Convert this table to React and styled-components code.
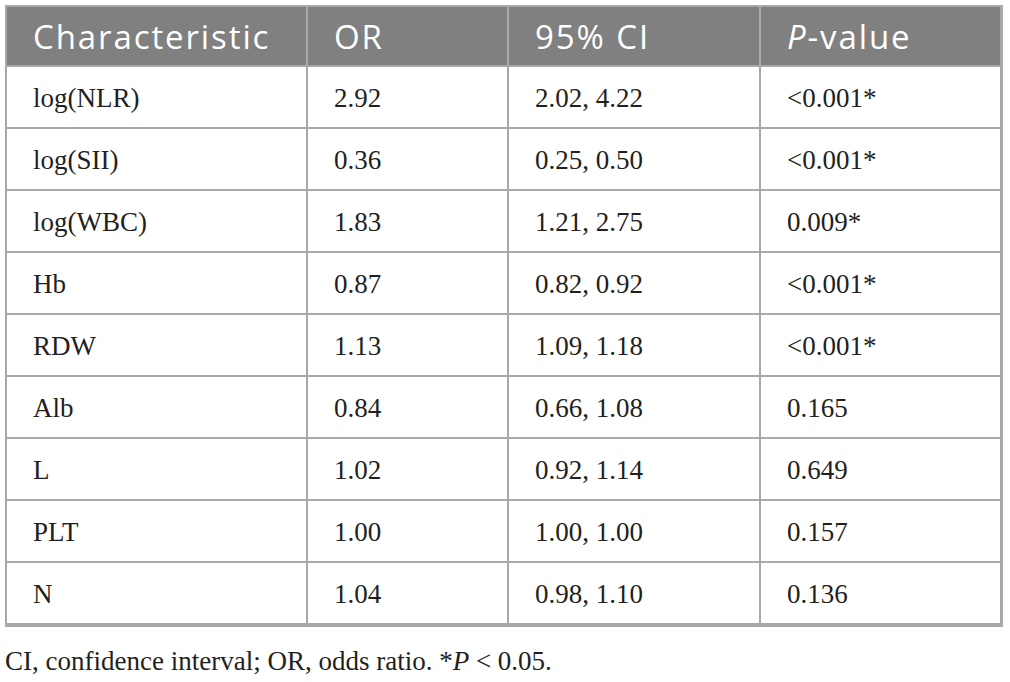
import React from 'react';
import styled, { createGlobalStyle } from 'styled-components';

const GlobalStyle = createGlobalStyle`
  html, body {
    margin: 0;
    padding: 0;
    background: #ffffff;
  }
`;

const rows = [
  ['log(NLR)', '2.92', '2.02, 4.22', '<0.001*'],
  ['log(SII)', '0.36', '0.25, 0.50', '<0.001*'],
  ['log(WBC)', '1.83', '1.21, 2.75', '0.009*'],
  ['Hb', '0.87', '0.82, 0.92', '<0.001*'],
  ['RDW', '1.13', '1.09, 1.18', '<0.001*'],
  ['Alb', '0.84', '0.66, 1.08', '0.165'],
  ['L', '1.02', '0.92, 1.14', '0.649'],
  ['PLT', '1.00', '1.00, 1.00', '0.157'],
  ['N', '1.04', '0.98, 1.10', '0.136'],
];

const Page = styled.div`
  padding: 5px 0 0 5px;
  width: 1010px;
  box-sizing: border-box;
`;

const Table = styled.table`
  border-collapse: separate;
  border-spacing: 0;
  table-layout: fixed;
  width: 998px;
  border-style: solid;
  border-color: #a8a8a8;
  border-width: 2px 3px 4px 2px;
`;

const HeadCell = styled.th`
  height: 60px;
  padding: 0 0 0 26px;
  box-sizing: border-box;
  background: #808080;
  color: #ffffff;
  font-family: 'Open Sans', 'DejaVu Sans', sans-serif;
  font-weight: 400;
  font-size: 33px;
  letter-spacing: 1.9px;
  text-align: left;
  vertical-align: middle;
  border-bottom: 2px solid #a8a8a8;
  border-right: ${(p) => (p.$last ? 'none' : '2px solid #a8a8a8')};
`;

const Cell = styled.td`
  height: 57px;
  padding: 3px 0 0 26px;
  box-sizing: content-box;
  color: #231f20;
  font-family: 'Liberation Serif', 'Times New Roman', serif;
  font-size: 27px;
  line-height: 31px;
  vertical-align: middle;
  border-bottom: ${(p) => (p.$bottom ? 'none' : '2px solid #a8a8a8')};
  border-right: ${(p) => (p.$last ? 'none' : '2px solid #a8a8a8')};
`;

const Italic = styled.i`
  font-style: italic;
`;

const Note = styled.p`
  margin: 18px 0 0 0;
  color: #231f20;
  font-family: 'Liberation Serif', 'Times New Roman', serif;
  font-size: 27px;
  line-height: 32px;
`;

const widths = [301, 201, 252, 239];

export default function App() {
  return (
    <Page>
      <GlobalStyle />
      <Table>
        <colgroup>
          {widths.map((w, i) => (
            <col key={i} style={{ width: w }} />
          ))}
        </colgroup>
        <thead>
          <tr>
            <HeadCell>Characteristic</HeadCell>
            <HeadCell>OR</HeadCell>
            <HeadCell>95% CI</HeadCell>
            <HeadCell $last>
              <Italic>P</Italic>-value
            </HeadCell>
          </tr>
        </thead>
        <tbody>
          {rows.map((r, i) => (
            <tr key={r[0]}>
              {r.map((v, j) => (
                <Cell key={j} $last={j === 3} $bottom={i === rows.length - 1}>
                  {v}
                </Cell>
              ))}
            </tr>
          ))}
        </tbody>
      </Table>
      <Note>
        CI, confidence interval; OR, odds ratio. *<Italic>P</Italic> &lt; 0.05.
      </Note>
    </Page>
  );
}
